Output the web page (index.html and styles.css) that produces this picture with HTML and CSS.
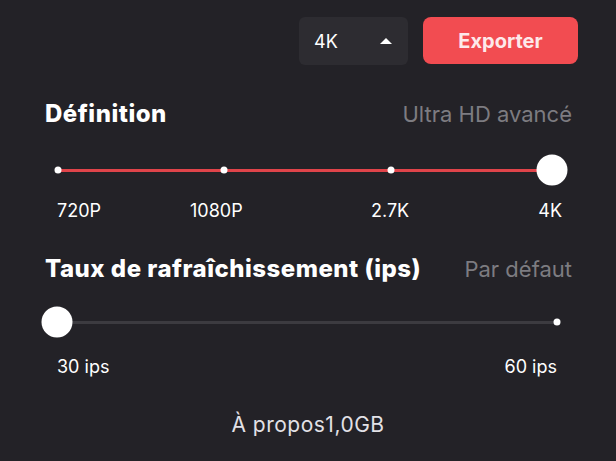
FILE: index.html
```html
<!DOCTYPE html>
<html lang="fr">
<head>
    <meta charset="UTF-8">
    <meta name="viewport" content="width=device-width, initial-scale=1.0">
    <title>Exporter</title>
    <link rel="stylesheet" href="styles.css">
</head>
<body>

    <div class="topbar">
        <div class="select">
            <span>4K</span>
            <span class="caret"></span>
        </div>
        <button class="export">Exporter</button>
    </div>

    <section class="group">
        <div class="group-head">
            <h2>Définition</h2>
            <span class="hint">Ultra HD avancé</span>
        </div>
        <div class="slider">
            <div class="track red"></div>
            <span class="dot" style="left: 0%"></span>
            <span class="dot" style="left: 33.6%"></span>
            <span class="dot" style="left: 67.4%"></span>
            <span class="knob" style="left: 100%"></span>
        </div>
        <div class="labels">
            <span style="left: 0%">720P</span>
            <span style="left: 26.6%">1080P</span>
            <span style="left: 62.8%">2.7K</span>
            <span class="end" style="left: 101%">4K</span>
        </div>
    </section>

    <section class="group second">
        <div class="group-head">
            <h2>Taux de rafraîchissement (ips)</h2>
            <span class="hint">Par défaut</span>
        </div>
        <div class="slider wide">
            <div class="track"></div>
            <span class="knob" style="left: 0%"></span>
            <span class="dot" style="left: 100%"></span>
        </div>
        <div class="labels">
            <span style="left: 0%">30 ips</span>
            <span class="end" style="left: 100%">60 ips</span>
        </div>
    </section>

    <p class="size">À propos1,0GB</p>

</body>
</html>
```

FILE: styles.css
```css
body {
    margin: 0;
    width: 616px;
    height: 461px;
    background-color: #232227;
    color: #fff;
    font-family: 'Inter', 'Noto Sans', sans-serif;
    overflow: hidden;
}

.topbar {
    display: flex;
    justify-content: flex-end;
    gap: 15px;
    padding: 17px 38px 0 0;
}

.select {
    width: 109px;
    height: 48px;
    box-sizing: border-box;
    padding: 0 16px 0 15px;
    background-color: #2d2c31;
    border-radius: 6px;
    display: flex;
    align-items: center;
    justify-content: space-between;
    font-size: 18px;
}

.caret {
    width: 0;
    height: 0;
    border-left: 6px solid transparent;
    border-right: 6px solid transparent;
    border-bottom: 6px solid #fff;
}

.export {
    width: 155px;
    height: 47px;
    border: none;
    border-radius: 8px;
    background-color: #f24c51;
    color: #fde9ea;
    font-family: inherit;
    font-size: 20px;
    font-weight: bold;
}

.group {
    padding: 0 44px 0 45px;
    margin-top: 35px;
}

.group.second {
    margin-top: 32px;
}

.group-head {
    display: flex;
    justify-content: space-between;
    align-items: baseline;
    line-height: 28px;
}

.group-head h2 {
    margin: 0;
    font-size: 24px;
    font-weight: 800;
    letter-spacing: 0.5px;
}

.hint {
    color: #7d7c81;
    font-size: 22px;
}

.slider {
    position: relative;
    height: 30px;
    margin: 27px 20px 0 13px;
}

.slider.wide {
    margin: 24px 15px 0 12px;
}

.track {
    position: absolute;
    left: 0;
    right: 0;
    top: 14px;
    height: 3px;
    background-color: #3c3b40;
}

.track.red {
    background-color: #e0444a;
}

.dot,
.knob {
    position: absolute;
    top: 15px;
    background-color: #fff;
    border-radius: 50%;
    transform: translate(-50%, -50%);
}

.dot {
    width: 7px;
    height: 7px;
}

.knob {
    width: 31px;
    height: 31px;
}

.labels {
    position: relative;
    height: 24px;
    margin: 14px 15px 0 12px;
    font-size: 18px;
    line-height: 24px;
}

.labels span {
    position: absolute;
    top: 0;
    white-space: nowrap;
}

.labels .end {
    transform: translateX(-100%);
}

.second .labels {
    margin-top: 18px;
}

.size {
    margin: 33px 0 0;
    text-align: center;
    font-size: 21px;
    letter-spacing: 0.5px;
    color: #e2e1e6;
}
```
